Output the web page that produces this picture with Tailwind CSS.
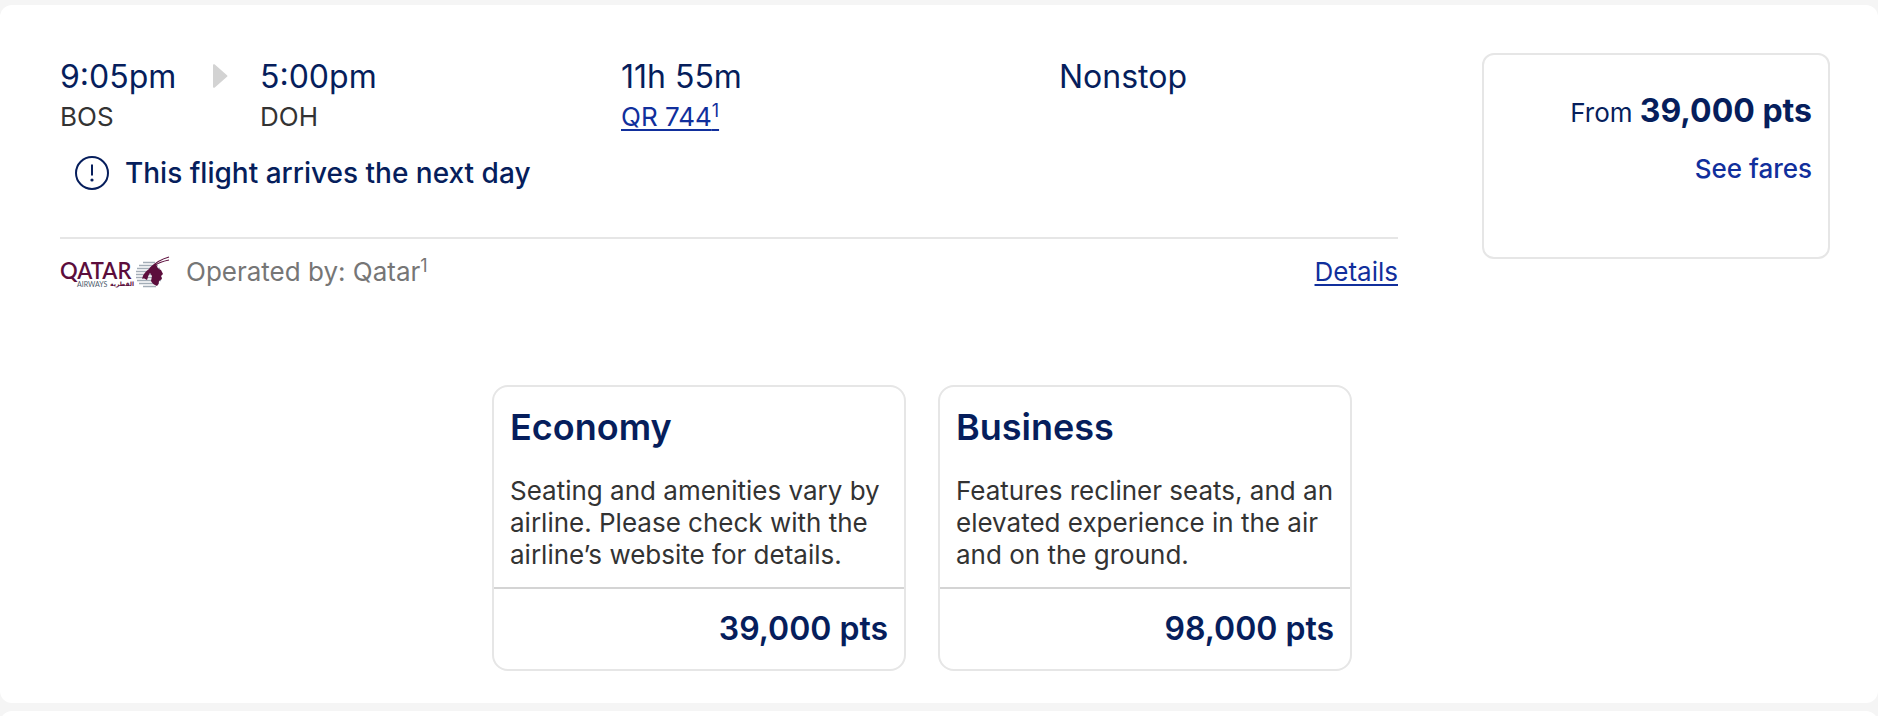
<!doctype html>
<html lang="en">
<head>
    <meta charset="UTF-8">
    <meta name="viewport" content="width=device-width, initial-scale=1.0">
    <script src="https://cdn.jsdelivr.net/npm/@tailwindcss/browser@4"></script>
    <title>Flight results</title>
</head>

<body class="bg-[#f5f5f5] pt-[5px] font-['Inter','Liberation_Sans',sans-serif] text-[26px] leading-8 text-[#333] overflow-hidden">

    <!-- Flight -->
    <article class="bg-white rounded-xl pl-[60px] pr-12 pt-12 pb-8">

        <div class="flex items-start gap-21">

            <!-- Itinerary -->
            <div class="flex-1">
                <div class="grid grid-cols-[200fr_361fr_438fr_339fr] pt-1">
                    <div class="flex">
                        <div class="w-[153px]">
                            <p class="text-[32px] leading-10 text-[#061e5c]">9:05pm</p>
                            <p class="leading-10">BOS</p>
                        </div>
                        <svg class="mt-[7px] w-[15px] h-6" viewBox="0 0 15 24" fill="#d3d3d3" aria-hidden="true">
                            <path d="M0 1.2C0 .2 1 -.2 1.8 .5L14 11.2C14.6 11.7 14.6 12.3 14 12.8L1.8 23.5C1 24.2 0 23.8 0 22.8Z"/>
                        </svg>
                    </div>
                    <div>
                        <p class="text-[32px] leading-10 text-[#061e5c]">5:00pm</p>
                        <p class="leading-10">DOH</p>
                    </div>
                    <div>
                        <p class="text-[32px] leading-10 text-[#061e5c]">11h 55m</p>
                        <p class="leading-10"><a href="#" class="text-[#112f9c] underline decoration-2 underline-offset-3">QR 744<sup class="text-[18px]">1</sup></a></p>
                    </div>
                    <p class="text-[32px] leading-10 text-[#061e5c]">Nonstop</p>
                </div>

                <p class="flex items-center gap-4 pl-[15px] mt-[18px] pb-[46px] text-[28px] leading-9 font-medium text-[#061e5c] border-b-2 border-[#e6e6e6]">
                    <svg class="w-[34px] h-[34px]" viewBox="0 0 34 34" fill="none" stroke="currentColor" stroke-width="2" aria-hidden="true">
                        <circle cx="17" cy="17" r="16"/>
                        <path d="M17 8.5V19.5"/>
                        <circle cx="17" cy="24" r="1.6" fill="currentColor" stroke="none"/>
                    </svg>
                    This flight arrives the next day
                </p>

                <div class="flex items-center pt-[17px]">
                    <!-- Qatar Airways logo -->
                    <svg class="w-[110px] h-8" viewBox="0 0 110 32" role="img" aria-label="Qatar Airways">
                        <text x="0" y="23" font-family="Lato, sans-serif" font-weight="600" font-size="22" fill="#5c0d3c">QATAR</text>
                        <text x="17" y="31" font-family="Lato, sans-serif" font-size="7" fill="#4d5b6b">AIRWAYS</text>
                        <text x="50" y="30" font-family="DejaVu Sans, sans-serif" font-weight="700" font-size="6" fill="#5c0d3c">القطرية</text>
                        <path d="M83 6.5H95M79 9.5H98M77 12.5H100M76 15.5H101M76 18.5H102M76 21.5H102M77 24.5H101M79 27.5H99M83 30.5H96" stroke="#a3adb7" stroke-width="1.7"/>
                        <path d="M82 23C83 18 86 15 89 13C90 11 92 9 95 8L97 10C97 12 99 13 101 14L103 18L101 20L102 23C101 24 100 24 99 25C99 27 98 29 97 30C94 29 92 27 91 25L92 20L90 17C88 19 88 22 87 24C85 23 84 22 82 23Z" fill="#5c0d3c"/>
                        <path d="M92 11C96 6 102 3 109 1M94 10C99 6 104 5 109 4" fill="none" stroke="#5c0d3c" stroke-width="1.2"/>
                    </svg>
                    <p class="pl-4 text-[#767676]">Operated by: Qatar<sup class="text-[18px]">1</sup></p>
                    <a href="#" class="ml-auto text-[#112f9c] underline decoration-2 underline-offset-3">Details</a>
                </div>
            </div>

            <!-- Lowest fare -->
            <div class="w-[348px] h-[206px] border-2 border-[#e6e6e6] rounded-xl px-4 pt-8 text-right">
                <p class="leading-12 text-[#061e5c]">From <strong class="text-[32px] font-bold">39,000 pts</strong></p>
                <button type="button" class="mt-4 font-medium text-[#112f9c]">See fares</button>
            </div>
        </div>

        <!-- Fares -->
        <div class="flex justify-center gap-8 mt-[97px] pr-[46px]">
            <section class="w-[414px] border-2 border-[#e6e6e6] rounded-2xl">
                <div class="px-4 pt-4 pb-4">
                    <h2 class="text-[36px] leading-12 font-semibold text-[#061e5c]">Economy</h2>
                    <p class="mt-6">Seating and amenities vary by airline. Please check with the airline’s website for details.</p>
                </div>
                <p class="border-t-2 border-[#d4d4d4] px-4 py-5 text-right text-[32px] leading-10 font-semibold text-[#061e5c]">39,000 pts</p>
            </section>
            <section class="w-[414px] border-2 border-[#e6e6e6] rounded-2xl">
                <div class="px-4 pt-4 pb-4">
                    <h2 class="text-[36px] leading-12 font-semibold text-[#061e5c]">Business</h2>
                    <p class="mt-6">Features recliner seats, and an elevated experience in the air and on the ground.</p>
                </div>
                <p class="border-t-2 border-[#d4d4d4] px-4 py-5 text-right text-[32px] leading-10 font-semibold text-[#061e5c]">98,000 pts</p>
            </section>
        </div>
    </article>

    <!-- Next flight -->
    <article class="bg-white rounded-t-xl mt-2 h-8"></article>

</body>
</html>
